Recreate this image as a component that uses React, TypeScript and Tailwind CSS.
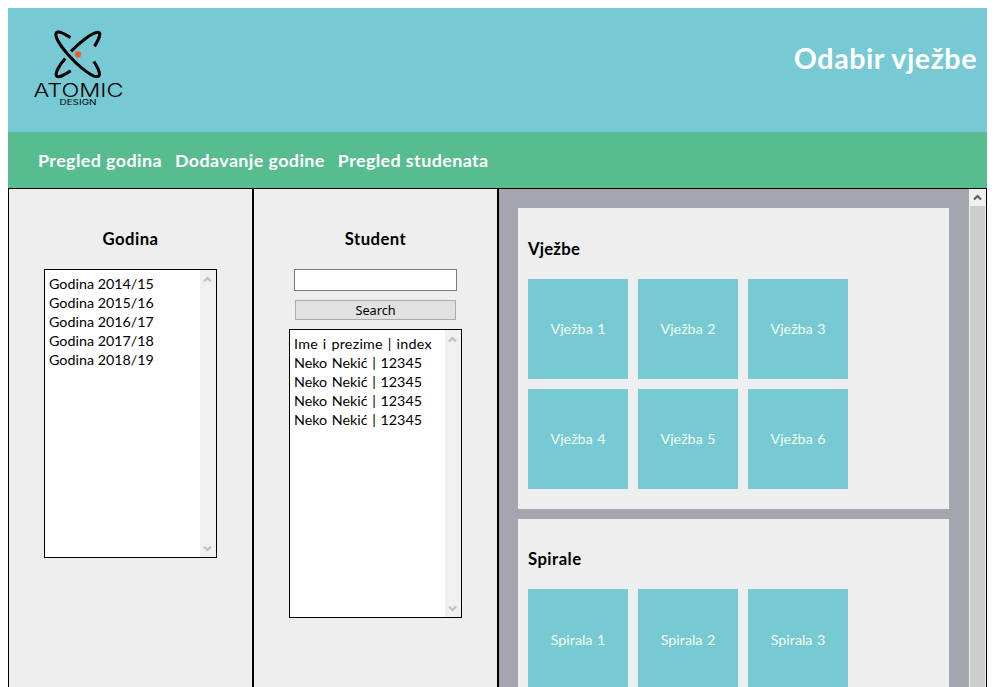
const years = ['Godina 2014/15', 'Godina 2015/16', 'Godina 2016/17', 'Godina 2017/18', 'Godina 2018/19'];
const students = [
  'Ime i prezime | index',
  'Neko Nekić | 12345',
  'Neko Nekić | 12345',
  'Neko Nekić | 12345',
  'Neko Nekić | 12345',
];
const sections = [
  { title: 'Vježbe', heading: 'pt-[29px] tracking-[0.2px]', tile: '', items: ['Vježba 1', 'Vježba 2', 'Vježba 3', 'Vježba 4', 'Vježba 5', 'Vježba 6'] },
  { title: 'Spirale', heading: 'pt-[28px] tracking-[0.45px]', tile: 'pt-[2px]', items: ['Spirala 1', 'Spirala 2', 'Spirala 3'] },
];

function Logo() {
  return (
    <svg width="100" height="85" viewBox="28 25 100 85" className="block">
      <g fill="none" stroke="#000" strokeWidth="3.1">
        <path d="M70.5 37.6C64 33.5 58.5 31 56.6 32.5C53.5 36 61 46.500 68 54.500C76 64 90 76 96.500 76.800C102.500 77 98.500 68.500 93.800 61.500" />
        <path d="M71 51.300C80 42 92 32.500 98 32.300C102 32.500 98.500 40 94.500 46.300" />
        <path d="M65.200 58.500C59 65.500 54.500 73.500 56.800 76.300C59.500 78 65 74.500 70.700 70.800" />
      </g>
      <circle cx="78" cy="54.400" r="3.100" fill="#f15a29" />
      <text fontFamily="Inter, sans-serif">
        <tspan x="33.500" y="97" fontSize="18" fontWeight="300" textLength="90" lengthAdjust="spacingAndGlyphs">ATOMIC</tspan>
        <tspan x="59.500" y="105" fontSize="7.200" textLength="37" lengthAdjust="spacingAndGlyphs">DESIGN</tspan>
      </text>
    </svg>
  );
}

function Chevron({ down = false, color }: { down?: boolean; color: string }) {
  return (
    <svg width="9" height="7" viewBox="0 0 9 7" fill="none" stroke={color} strokeWidth="2.2" className="block">
      <path d={down ? 'M1 1.500L4.500 5L8 1.500' : 'M1 5.500L4.500 2L8 5.500'} />
    </svg>
  );
}

function ListBox({ items, firstRow, rows }: { items: string[]; firstRow: string; rows: string }) {
  return (
    <div className="flex h-[289px] w-[173px] justify-between border border-black bg-white">
      <ul className="pt-1 pl-1 text-[14.3px] leading-[19px] whitespace-nowrap">
        {items.map((item, i) => (
          <li key={i} className={i === 0 ? firstRow : rows}>{item}</li>
        ))}
      </ul>
      <div className="flex w-4 shrink-0 flex-col items-center justify-between bg-[#f0f0f0] pt-[6px] pr-[2px] pb-[5px]">
        <Chevron color="#bfbfbf" />
        <Chevron down color="#bfbfbf" />
      </div>
    </div>
  );
}

export default function App() {
  return (
    <div className="flex h-[687px] flex-col overflow-hidden bg-white pt-2 pr-2 pl-2 font-['Lato',sans-serif] text-black">
      <header className="flex h-[124px] shrink-0 justify-between bg-[#77c9d4] pt-[17px] pr-[10px] pl-5">
        <Logo />
        <h1 className="pt-[13px] text-[28.6px] leading-10 font-bold tracking-[0.57px] text-white">Odabir vježbe</h1>
      </header>
      <nav className="flex h-14 shrink-0 items-center gap-[13px] bg-[#57bc90] pl-[30px] text-[17.9px] font-bold tracking-[0.4px] text-white">
        <a>Pregled godina</a>
        <a>Dodavanje godine</a>
        <a>Pregled studenata</a>
      </nav>
      <main className="flex min-h-0 flex-1">
        <section className="flex w-[245px] shrink-0 flex-col items-center border border-b-0 border-black bg-[#eee]">
          <h3 className="mt-[38px] mb-[18px] text-[16.7px] leading-6 font-bold tracking-[0.5px]">Godina</h3>
          <ListBox items={years} firstRow="" rows="" />
        </section>
        <section className="flex w-[245px] shrink-0 flex-col items-center border border-b-0 border-black bg-[#eee]">
          <h3 className="mt-[38px] mb-[18px] text-[16.7px] leading-6 font-bold tracking-[0.45px]">Student</h3>
          <input className="h-[22px] w-[163px] border border-[#7a7a7a] bg-white" />
          <button className="mt-[9px] mb-[9px] h-5 w-[161px] border border-[#adadad] bg-[#e1e1e1] font-['Noto_Sans',sans-serif] text-[12.7px] leading-[18px]">
            Search
          </button>
          <ListBox items={students} firstRow="tracking-[0.27px] [word-spacing:0.9px]" rows="[word-spacing:1px]" />
        </section>
        <section className="flex min-w-0 flex-1 border border-b-0 border-black bg-[#a5a5af]">
          <div className="flex flex-1 flex-col gap-[10px] overflow-hidden pt-[19px] pr-5 pl-[19px]">
            {sections.map((section) => (
              <div key={section.title} className="shrink-0 bg-[#eee] px-[10px] pb-5">
                <h3 className={`${section.heading} pb-[18px] text-[16.7px] leading-6 font-bold`}>{section.title}</h3>
                <div className="flex w-[320px] flex-wrap gap-[10px]">
                  {section.items.map((item) => (
                    <div key={item} className={`${section.tile} flex size-[100px] items-center justify-center bg-[#77c9d4] text-[14.3px] text-[#f0fff0] [word-spacing:0.8px]`}>
                      {item}
                    </div>
                  ))}
                </div>
              </div>
            ))}
          </div>
          <div className="flex w-[17px] flex-col bg-[#f0f0f0]">
            <div className="flex h-[17px] shrink-0 items-center justify-center">
              <Chevron color="#606060" />
            </div>
            <div className="mx-px flex-1 bg-[#cdcdcd]" />
          </div>
        </section>
      </main>
    </div>
  );
}
